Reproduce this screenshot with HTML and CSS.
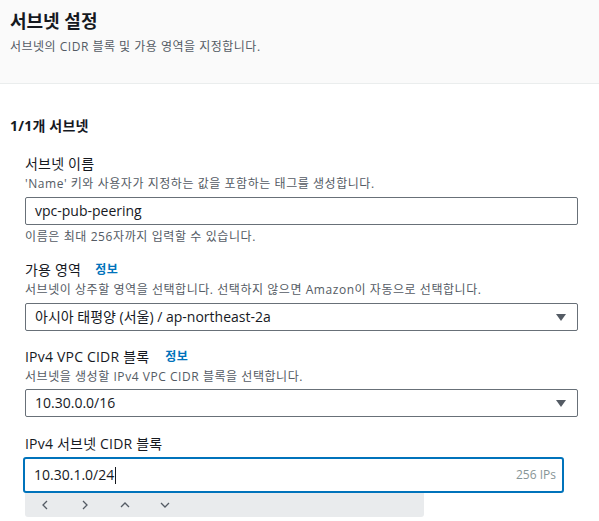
FILE: index.html
```html
<!DOCTYPE html>
<html lang="ko">
<head>
<meta charset="utf-8">
<link rel="stylesheet" href="styles.css">
</head>
<body>
<div class="header">
  <h1 class="title">서브넷 설정</h1>
  <p class="subtitle">서브넷의 CIDR 블록 및 가용 영역을 지정합니다.</p>
</div>
<div class="section">
  <h2 class="section-title">1/1개 서브넷</h2>
  <div class="fields">
    <div class="field">
      <div class="label">서브넷 이름</div>
      <div class="desc">'Name' 키와 사용자가 지정하는 값을 포함하는 태그를 생성합니다.</div>
      <div class="input">vpc-pub-peering</div>
      <div class="helper">이름은 최대 256자까지 입력할 수 있습니다.</div>
    </div>
    <div class="field">
      <div class="label">가용 영역<span class="info">정보</span></div>
      <div class="desc">서브넷이 상주할 영역을 선택합니다. 선택하지 않으면 Amazon이 자동으로 선택합니다.</div>
      <div class="input select">아시아 태평양 (서울) / ap-northeast-2a<span class="caret"></span></div>
    </div>
    <div class="field">
      <div class="label">IPv4 VPC CIDR 블록<span class="info wide">정보</span></div>
      <div class="desc">서브넷을 생성할 IPv4 VPC CIDR 블록을 선택합니다.</div>
      <div class="input select tight">10.30.0.0/16<span class="caret"></span></div>
    </div>
    <div class="field">
      <div class="label">IPv4 서브넷 CIDR 블록</div>
      <div class="input focused"><span class="value">10.30.1.0/24<span class="cursor"></span></span><span class="count">256 IPs</span></div>
      <div class="toolbar">
        <svg width="12" height="12" viewBox="0 0 12 12"><path d="M8 2 L4 6 L8 10" fill="none" stroke="#545b64" stroke-width="1.3"/></svg>
        <svg width="12" height="12" viewBox="0 0 12 12"><path d="M4 2 L8 6 L4 10" fill="none" stroke="#545b64" stroke-width="1.3"/></svg>
        <svg width="12" height="12" viewBox="0 0 12 12"><path d="M2 8 L6 4 L10 8" fill="none" stroke="#545b64" stroke-width="1.3"/></svg>
        <svg width="12" height="12" viewBox="0 0 12 12"><path d="M2 4 L6 8 L10 4" fill="none" stroke="#545b64" stroke-width="1.3"/></svg>
      </div>
    </div>
  </div>
</div>
</body>
</html>
```
FILE: styles.css
```css
* { box-sizing: border-box; }
body {
  margin: 0;
  background: #ffffff;
  font-family: "Open Sans", "Noto Sans CJK KR", sans-serif;
  color: #16191f;
}
.header {
  height: 84px;
  background: #fafafa;
  border-bottom: 1px solid #eaeded;
  padding: 10px 10px 0;
}
.title {
  margin: 0;
  font-size: 18px;
  line-height: 22px;
  font-weight: 700;
}
.subtitle {
  margin: 7px 0 0;
  font-size: 12px;
  line-height: 16px;
  color: #545b64;
  letter-spacing: 0.5px;
}
.section {
  padding: 32px 21px 0 10px;
}
.section-title {
  margin: 0;
  font-size: 14px;
  line-height: 20px;
  font-weight: 700;
  letter-spacing: 0.2px;
}
.fields {
  padding-left: 15px;
  display: flex;
  flex-direction: column;
}
.field {
  display: flex;
  flex-direction: column;
}
.field:nth-child(1) { margin-top: 18px; }
.field:nth-child(2) { margin-top: 15px; }
.field:nth-child(3) { margin-top: 16px; }
.field:nth-child(4) { margin-top: 17px; }
.label {
  font-size: 14px;
  line-height: 20px;
  letter-spacing: 0.2px;
  display: flex;
  align-items: center;
}
.info {
  margin-left: 14px;
  font-size: 12px;
  font-weight: 700;
  color: #0073bb;
  letter-spacing: 0.5px;
}
.info.wide { margin-left: 16px; }
.desc {
  margin-top: 2px;
  font-size: 12px;
  line-height: 16px;
  color: #545b64;
  letter-spacing: 0.55px;
}
.input {
  margin-top: 5px;
  height: 28px;
  border: 1px solid #687078;
  border-radius: 2px;
  padding: 0 10px 0 9px;
  font-size: 14px;
  line-height: 26px;
  display: flex;
  align-items: center;
  justify-content: space-between;
}
.input.tight { margin-top: 4px; }
.helper {
  margin-top: 4px;
  font-size: 12px;
  line-height: 16px;
  color: #545b64;
  letter-spacing: 0.6px;
}
.caret {
  width: 0;
  height: 0;
  border-left: 5px solid transparent;
  border-right: 5px solid transparent;
  border-top: 7px solid #545b64;
  margin-right: 1px;
}
.input.focused {
  margin-top: 3px;
  margin-left: -2px;
  margin-right: 14px;
  height: 36px;
  border: 2px solid #0073bb;
  border-radius: 3px;
  padding: 0 6px 0 9px;
}
.value {
  display: flex;
  align-items: center;
}
.cursor {
  display: inline-block;
  width: 1px;
  height: 17px;
  background: #16191f;
  margin-left: 1px;
}
.count {
  font-size: 12px;
  color: #879596;
}
.toolbar {
  width: 399px;
  height: 24px;
  background: #e9ebed;
  border-radius: 0 0 3px 3px;
  display: flex;
  align-items: center;
  gap: 28px;
  padding-left: 14px;
}
```
